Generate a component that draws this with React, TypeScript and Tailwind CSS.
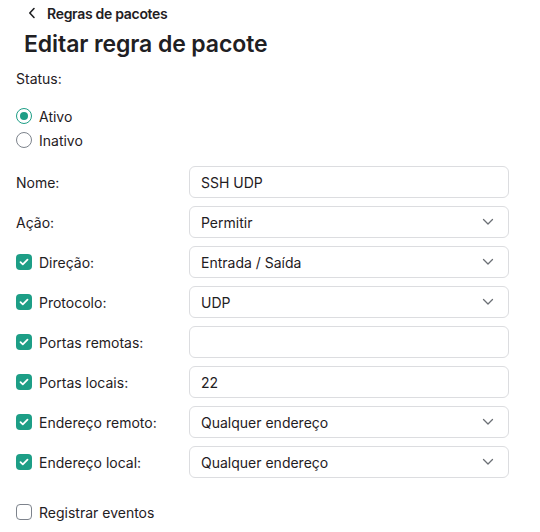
import { FC } from 'react';

const TEAL = 'bg-[#1d9e86]';

const Chevron: FC = () => (
  <svg width="12" height="8" viewBox="0 0 12 8" fill="none" className="shrink-0">
    <path d="M1.5 1.5L6 6L10.5 1.5" stroke="#6b6f75" strokeWidth="1.3" strokeLinecap="round" strokeLinejoin="round" />
  </svg>
);

const Checkbox: FC<{ checked?: boolean }> = ({ checked }) =>
  checked ? (
    <span className={`flex h-4 w-4 shrink-0 items-center justify-center rounded-[4px] ${TEAL}`}>
      <svg width="10" height="8" viewBox="0 0 10 8" fill="none">
        <path d="M1.5 4.2L3.8 6.3L8.5 1.7" stroke="white" strokeWidth="1.8" strokeLinecap="round" strokeLinejoin="round" />
      </svg>
    </span>
  ) : (
    <span className="h-4 w-4 shrink-0 rounded-[4px] border-[1.5px] border-[#7d838c] bg-white" />
  );

const Radio: FC<{ checked?: boolean; label: string }> = ({ checked, label }) => (
  <div className="flex h-6 items-center gap-[7px]">
    {checked ? (
      <span className="flex h-4 w-4 items-center justify-center rounded-full border-[1.5px] border-[#1d9e86]">
        <span className={`h-2 w-2 rounded-full ${TEAL}`} />
      </span>
    ) : (
      <span className="h-4 w-4 rounded-full border-[1.5px] border-[#7d838c]" />
    )}
    <span>{label}</span>
  </div>
);

const Field: FC<{ value?: string; select?: boolean }> = ({ value, select }) => (
  <div className="flex h-8 w-[320px] items-center justify-between rounded-[6px] border border-[#dcdde0] bg-white pl-[11px] pr-[14px]">
    <span>{value}</span>
    {select && <Chevron />}
  </div>
);

interface Row {
  label: string;
  value?: string;
  select?: boolean;
  check?: boolean;
}

const rows: Row[] = [
  { label: 'Nome:', value: 'SSH UDP' },
  { label: 'Ação:', value: 'Permitir', select: true },
  { label: 'Direção:', value: 'Entrada / Saída', select: true, check: true },
  { label: 'Protocolo:', value: 'UDP', select: true, check: true },
  { label: 'Portas remotas:', check: true },
  { label: 'Portas locais:', value: '22', check: true },
  { label: 'Endereço remoto:', value: 'Qualquer endereço', select: true, check: true },
  { label: 'Endereço local:', value: 'Qualquer endereço', select: true, check: true },
];

export default function App() {
  return (
    <div className="h-[532px] w-[540px] overflow-hidden bg-white pl-4 font-['Inter',sans-serif] text-[14px] text-[#1f2023]">
      <div className="flex h-[26px] items-center gap-[11px] pl-[12px]">
        <svg width="8" height="12" viewBox="0 0 8 12" fill="none">
          <path d="M6 1.5L1.8 6L6 10.5" stroke="#1f2023" strokeWidth="1.6" strokeLinecap="round" strokeLinejoin="round" />
        </svg>
        <span className="font-semibold tracking-[-0.3px]">Regras de pacotes</span>
      </div>
      <h1 className="mt-[1px] pl-2 text-[23px] leading-[34px] font-semibold tracking-[-0.1px]">Editar regra de pacote</h1>

      <div className="mt-[6px] leading-6">Status:</div>
      <div className="mt-[13px] flex flex-col">
        <Radio checked label="Ativo" />
        <Radio label="Inativo" />
      </div>

      <div className="mt-[14px] flex flex-col gap-2">
        {rows.map(row => (
          <div key={row.label} className="flex h-8 items-center">
            <div className="flex w-[173px] items-center gap-[7px]">
              {row.check && <Checkbox checked />}
              <span>{row.label}</span>
            </div>
            <Field value={row.value} select={row.select} />
          </div>
        ))}
      </div>

      <div className="mt-[22px] flex h-6 items-center gap-[7px]">
        <Checkbox />
        <span>Registrar eventos</span>
      </div>
    </div>
  );
}
